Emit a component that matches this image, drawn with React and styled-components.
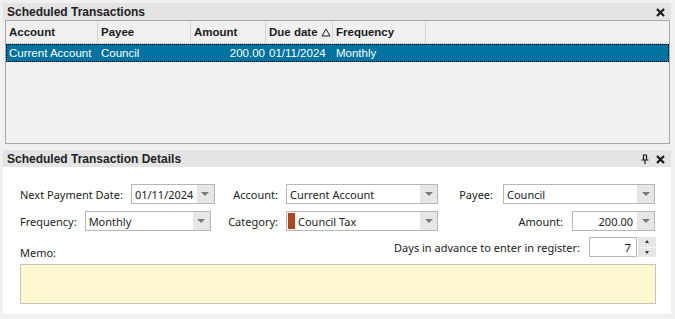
import React from "react";
import styled, { createGlobalStyle } from "styled-components";

const GlobalStyle = createGlobalStyle`
  html, body {
    margin: 0;
    padding: 0;
    background: #f0f0f0;
  }
`;

const Page = styled.div`
  width: 675px;
  height: 319px;
  box-sizing: border-box;
  padding: 3px 4px 0 3px;
  display: flex;
  flex-direction: column;
  background: #f0f0f0;
  font-family: "Liberation Sans", Arial, sans-serif;
  color: #1b1b1b;
`;

const TitleBar = styled.div`
  height: 17px;
  flex-shrink: 0;
  display: flex;
  align-items: center;
  justify-content: space-between;
  background: #e4e4e4;
  padding: 1px 6px 0 4px;
  box-sizing: border-box;
  font-size: 12px;
  font-weight: bold;
  color: #222;
`;

const TitleIcons = styled.div`
  display: flex;
  align-items: center;
  gap: 7px;
`;

const Grid = styled.div`
  height: 124px;
  flex-shrink: 0;
  margin: 0 1px 6px 2px;
  border: 1px solid #a9a9a9;
  background: #f0f0f0;
  box-sizing: border-box;
  font-size: 11.5px;
`;

const GridRow = styled.div`
  display: grid;
  grid-template-columns: 92px 93px 75px 67px 93px 1fr;
  height: ${(p) => (p.$header ? "23px" : "18px")};
  align-items: stretch;
  background: ${(p) => (p.$selected ? "#00729f" : "transparent")};
  color: ${(p) => (p.$selected ? "#fff" : "#1b1b1b")};
  font-weight: ${(p) => (p.$header ? "bold" : "normal")};
  outline: ${(p) => (p.$selected ? "1px dotted #000" : "none")};
  outline-offset: -1px;
  border-bottom: ${(p) => (p.$header ? "1px solid #d2d2d2" : "none")};
  box-sizing: border-box;
`;

const Cell = styled.div`
  display: flex;
  align-items: center;
  justify-content: ${(p) => (p.$right ? "flex-end" : "flex-start")};
  gap: 3px;
  padding: ${(p) => (p.$right ? "0 1px 0 3px" : "0 3px")};
  white-space: nowrap;
  overflow: hidden;
  border-right: ${(p) => (p.$header ? "1px solid #d4d4d4" : "none")};
  &:last-child {
    border-right: none;
  }
  svg {
    flex-shrink: 0;
  }
`;

const Details = styled.div`
  height: 147px;
  flex-shrink: 0;
  background: #fff;
  box-sizing: border-box;
  padding: 17px 15px 0 17px;
  display: flex;
  flex-direction: column;
  font-family: "Noto Sans", "Open Sans", sans-serif;
  font-size: 11px;
  color: #222;
`;

const FormRow = styled.div`
  display: grid;
  grid-template-columns: 189px 229px 217px;
  height: 20px;
  margin-bottom: ${(p) => p.$gap || 7}px;
`;

const Group = styled.div`
  display: flex;
  align-items: center;
  justify-content: ${(p) => (p.$spread ? "space-between" : "flex-end")};
  gap: ${(p) => p.$gap || 8}px;
`;

const Label = styled.span`
  white-space: nowrap;
  align-self: ${(p) => (p.$low ? "flex-end" : "auto")};
  margin-bottom: ${(p) => (p.$low ? "-3px" : "0")};
`;

const Combo = styled.div`
  width: ${(p) => p.$w}px;
  height: 20px;
  flex-shrink: 0;
  box-sizing: border-box;
  border: 1px solid #b7b7b7;
  display: flex;
  background: #fff;
`;

const ComboText = styled.div`
  flex: 1;
  display: flex;
  align-items: center;
  justify-content: ${(p) => (p.$right ? "flex-end" : "flex-start")};
  padding: 0 ${(p) => (p.$right ? "4px" : "3px")} 0 3px;
  white-space: nowrap;
  overflow: hidden;
`;

const Swatch = styled.div`
  width: 7px;
  margin: 1px 0 1px 1px;
  background: #b0461b;
`;

const DropButton = styled.div`
  width: 17px;
  background: #e6e6e6;
  display: flex;
  align-items: center;
  justify-content: center;
`;

const Arrow = styled.div`
  width: 0;
  height: 0;
  border-left: 4px solid transparent;
  border-right: 4px solid transparent;
  border-top: 4px solid #7a7a7a;
`;

const SpinRow = styled.div`
  display: flex;
  justify-content: space-between;
  align-items: center;
  height: 20px;
`;

const SpinGroup = styled.div`
  display: flex;
  align-items: center;
  gap: 9px;
  height: 20px;
`;

const Spinner = styled.div`
  display: flex;
  height: 20px;
`;

const SpinInput = styled.div`
  width: 48px;
  box-sizing: border-box;
  border: 1px solid #b7b7b7;
  display: flex;
  align-items: center;
  justify-content: flex-end;
  padding-right: 5px;
  background: #fff;
  font-size: 11.5px;
`;

const SpinButtons = styled.div`
  width: 18px;
  display: flex;
  flex-direction: column;
  background: #e6e6e6;
  margin-left: 1px;
  & > div {
    flex: 1;
    display: flex;
    align-items: center;
    justify-content: center;
  }
  & > div:first-child {
    border-bottom: 1px solid #f4f4f4;
  }
`;

const TinyArrow = styled.div`
  width: 0;
  height: 0;
  border-left: 2px solid transparent;
  border-right: 2px solid transparent;
  ${(p) =>
    p.$up ? "border-bottom: 3px solid #333;" : "border-top: 3px solid #333;"}
`;

const Memo = styled.div`
  margin-top: 7px;
  width: 636px;
  height: 40px;
  box-sizing: border-box;
  background: #fdf8d0;
  border: 1px solid #c4c4c4;
`;

const CloseIcon = () => (
  <svg width="9" height="9" viewBox="0 0 9 9">
    <path d="M1 1 L8 8 M8 1 L1 8" stroke="#1a1a1a" strokeWidth="2.2" />
  </svg>
);

const PinIcon = () => (
  <svg width="8" height="10" viewBox="0 0 8 10">
    <path
      d="M2 1 H6 M2.5 1 V6 M5.5 1 V6 M0.5 6 H7.5 M4 6 V10"
      stroke="#1a1a1a"
      strokeWidth="1.2"
      fill="none"
    />
  </svg>
);

const SortIcon = () => (
  <svg width="10" height="9" viewBox="0 0 10 9">
    <path d="M5 1 L9 8 H1 Z" stroke="#222" strokeWidth="1" fill="none" />
  </svg>
);

const Dropdown = ({ w, children, right, swatch }) => (
  <Combo $w={w}>
    {swatch && <Swatch />}
    <ComboText $right={right}>{children}</ComboText>
    <DropButton>
      <Arrow />
    </DropButton>
  </Combo>
);

export default function App() {
  return (
    <Page>
      <GlobalStyle />
      <TitleBar>
        <span>Scheduled Transactions</span>
        <TitleIcons>
          <CloseIcon />
        </TitleIcons>
      </TitleBar>
      <Grid>
        <GridRow $header>
          <Cell $header>Account</Cell>
          <Cell $header>Payee</Cell>
          <Cell $header>Amount</Cell>
          <Cell $header>
            Due date <SortIcon />
          </Cell>
          <Cell $header>Frequency</Cell>
          <Cell $header />
        </GridRow>
        <GridRow $selected>
          <Cell>Current Account</Cell>
          <Cell>Council</Cell>
          <Cell $right>200.00</Cell>
          <Cell>01/11/2024</Cell>
          <Cell>Monthly</Cell>
          <Cell />
        </GridRow>
      </Grid>
      <TitleBar>
        <span>Scheduled Transaction Details</span>
        <TitleIcons>
          <PinIcon />
          <CloseIcon />
        </TitleIcons>
      </TitleBar>
      <Details>
        <FormRow>
          <Group $spread>
            <Label>Next Payment Date:</Label>
            <Dropdown w={84}>01/11/2024</Dropdown>
          </Group>
          <Group>
            <Label>Account:</Label>
            <Dropdown w={152}>Current Account</Dropdown>
          </Group>
          <Group $gap={10}>
            <Label>Payee:</Label>
            <Dropdown w={152}>Council</Dropdown>
          </Group>
        </FormRow>
        <FormRow $gap={6}>
          <Group $spread>
            <Label>Frequency:</Label>
            <Dropdown w={126}>Monthly</Dropdown>
          </Group>
          <Group>
            <Label>Category:</Label>
            <Dropdown w={152} swatch>
              Council Tax
            </Dropdown>
          </Group>
          <Group $gap={9}>
            <Label>Amount:</Label>
            <Dropdown w={83} right>
              200.00
            </Dropdown>
          </Group>
        </FormRow>
        <SpinRow>
          <Label $low>Memo:</Label>
          <SpinGroup>
            <Label>Days in advance to enter in register:</Label>
            <Spinner>
              <SpinInput>7</SpinInput>
              <SpinButtons>
                <div>
                  <TinyArrow $up />
                </div>
                <div>
                  <TinyArrow />
                </div>
              </SpinButtons>
            </Spinner>
          </SpinGroup>
        </SpinRow>
        <Memo />
      </Details>
    </Page>
  );
}
